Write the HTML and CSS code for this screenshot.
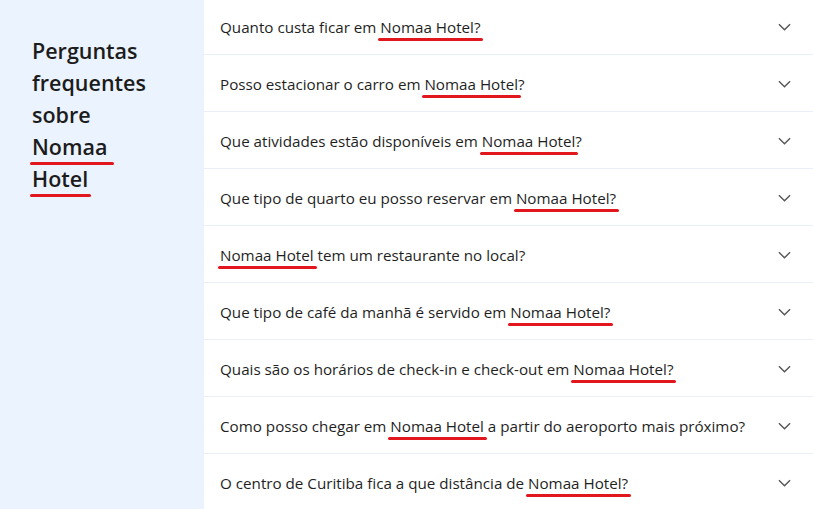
FILE: index.html
```html
<!DOCTYPE html>
<html lang="pt">
<head>
<meta charset="utf-8">
<link rel="stylesheet" href="styles.css">
</head>
<body>
<div class="page">
  <aside class="side">
    <h2 class="title">Perguntas frequentes sobre <span class="mark mark-wide">Nomaa</span> <span class="mark">Hotel</span></h2>
  </aside>
  <ul class="faq">
    <li class="row"><span class="q">Quanto custa ficar em <span class="mark">Nomaa Hotel?</span></span><svg class="chev" viewBox="0 0 14 8"><path d="M1 1l6 6 6-6"/></svg></li>
    <li class="row"><span class="q">Posso estacionar o carro em <span class="mark">Nomaa Hotel</span>?</span><svg class="chev" viewBox="0 0 14 8"><path d="M1 1l6 6 6-6"/></svg></li>
    <li class="row"><span class="q">Que atividades estão disponíveis em <span class="mark">Nomaa Hotel</span>?</span><svg class="chev" viewBox="0 0 14 8"><path d="M1 1l6 6 6-6"/></svg></li>
    <li class="row"><span class="q">Que tipo de quarto eu posso reservar em <span class="mark">Nomaa Hotel?</span></span><svg class="chev" viewBox="0 0 14 8"><path d="M1 1l6 6 6-6"/></svg></li>
    <li class="row"><span class="q"><span class="mark">Nomaa Hotel</span> tem um restaurante no local?</span><svg class="chev" viewBox="0 0 14 8"><path d="M1 1l6 6 6-6"/></svg></li>
    <li class="row"><span class="q">Que tipo de café da manhã é servido em <span class="mark">Nomaa Hotel?</span></span><svg class="chev" viewBox="0 0 14 8"><path d="M1 1l6 6 6-6"/></svg></li>
    <li class="row"><span class="q">Quais são os horários de check-in e check-out em <span class="mark">Nomaa Hotel?</span></span><svg class="chev" viewBox="0 0 14 8"><path d="M1 1l6 6 6-6"/></svg></li>
    <li class="row"><span class="q">Como posso chegar em <span class="mark">Nomaa Hotel</span> a partir do aeroporto mais próximo?</span><svg class="chev" viewBox="0 0 14 8"><path d="M1 1l6 6 6-6"/></svg></li>
    <li class="row"><span class="q">O centro de Curitiba fica a que distância de <span class="mark">Nomaa Hotel?</span></span><svg class="chev" viewBox="0 0 14 8"><path d="M1 1l6 6 6-6"/></svg></li>
  </ul>
</div>
</body>
</html>
```

FILE: styles.css
```css
html, body {
  margin: 0;
  padding: 0;
  background: #ffffff;
  overflow: hidden;
}
body {
  font-family: "Open Sans", "Noto Sans", sans-serif;
  color: #1f1f1f;
}
.page {
  display: flex;
  height: 509px;
}
.side {
  width: 204px;
  flex: none;
  background: #ebf3fe;
  box-sizing: border-box;
  padding: 35px 20px 0 32px;
}
.title {
  margin: 0;
  font-size: 21.5px;
  line-height: 32px;
  font-weight: 600;
  color: #1c1c1c;
  width: 130px;
}
.faq {
  list-style: none;
  margin: -2px 0 0 0;
  padding: 0;
  flex: 1;
}
.row {
  height: 54px;
  border-bottom: 1px solid #e8eff9;
  display: flex;
  align-items: center;
  justify-content: space-between;
  padding: 2px 22px 0 16px;
  box-sizing: content-box;
  font-size: 15.2px;
}
.q {
  white-space: nowrap;
}
.mark {
  position: relative;
}
.mark::after {
  content: "";
  position: absolute;
  left: -2px;
  right: -3px;
  bottom: -4px;
  height: 3.5px;
  border-radius: 2px;
  background: #e2161d;
}
.mark-wide::after {
  right: -7px;
}
.chev {
  width: 13px;
  height: 8px;
  fill: none;
  stroke: #555555;
  stroke-width: 1.5;
  flex: none;
}
```
